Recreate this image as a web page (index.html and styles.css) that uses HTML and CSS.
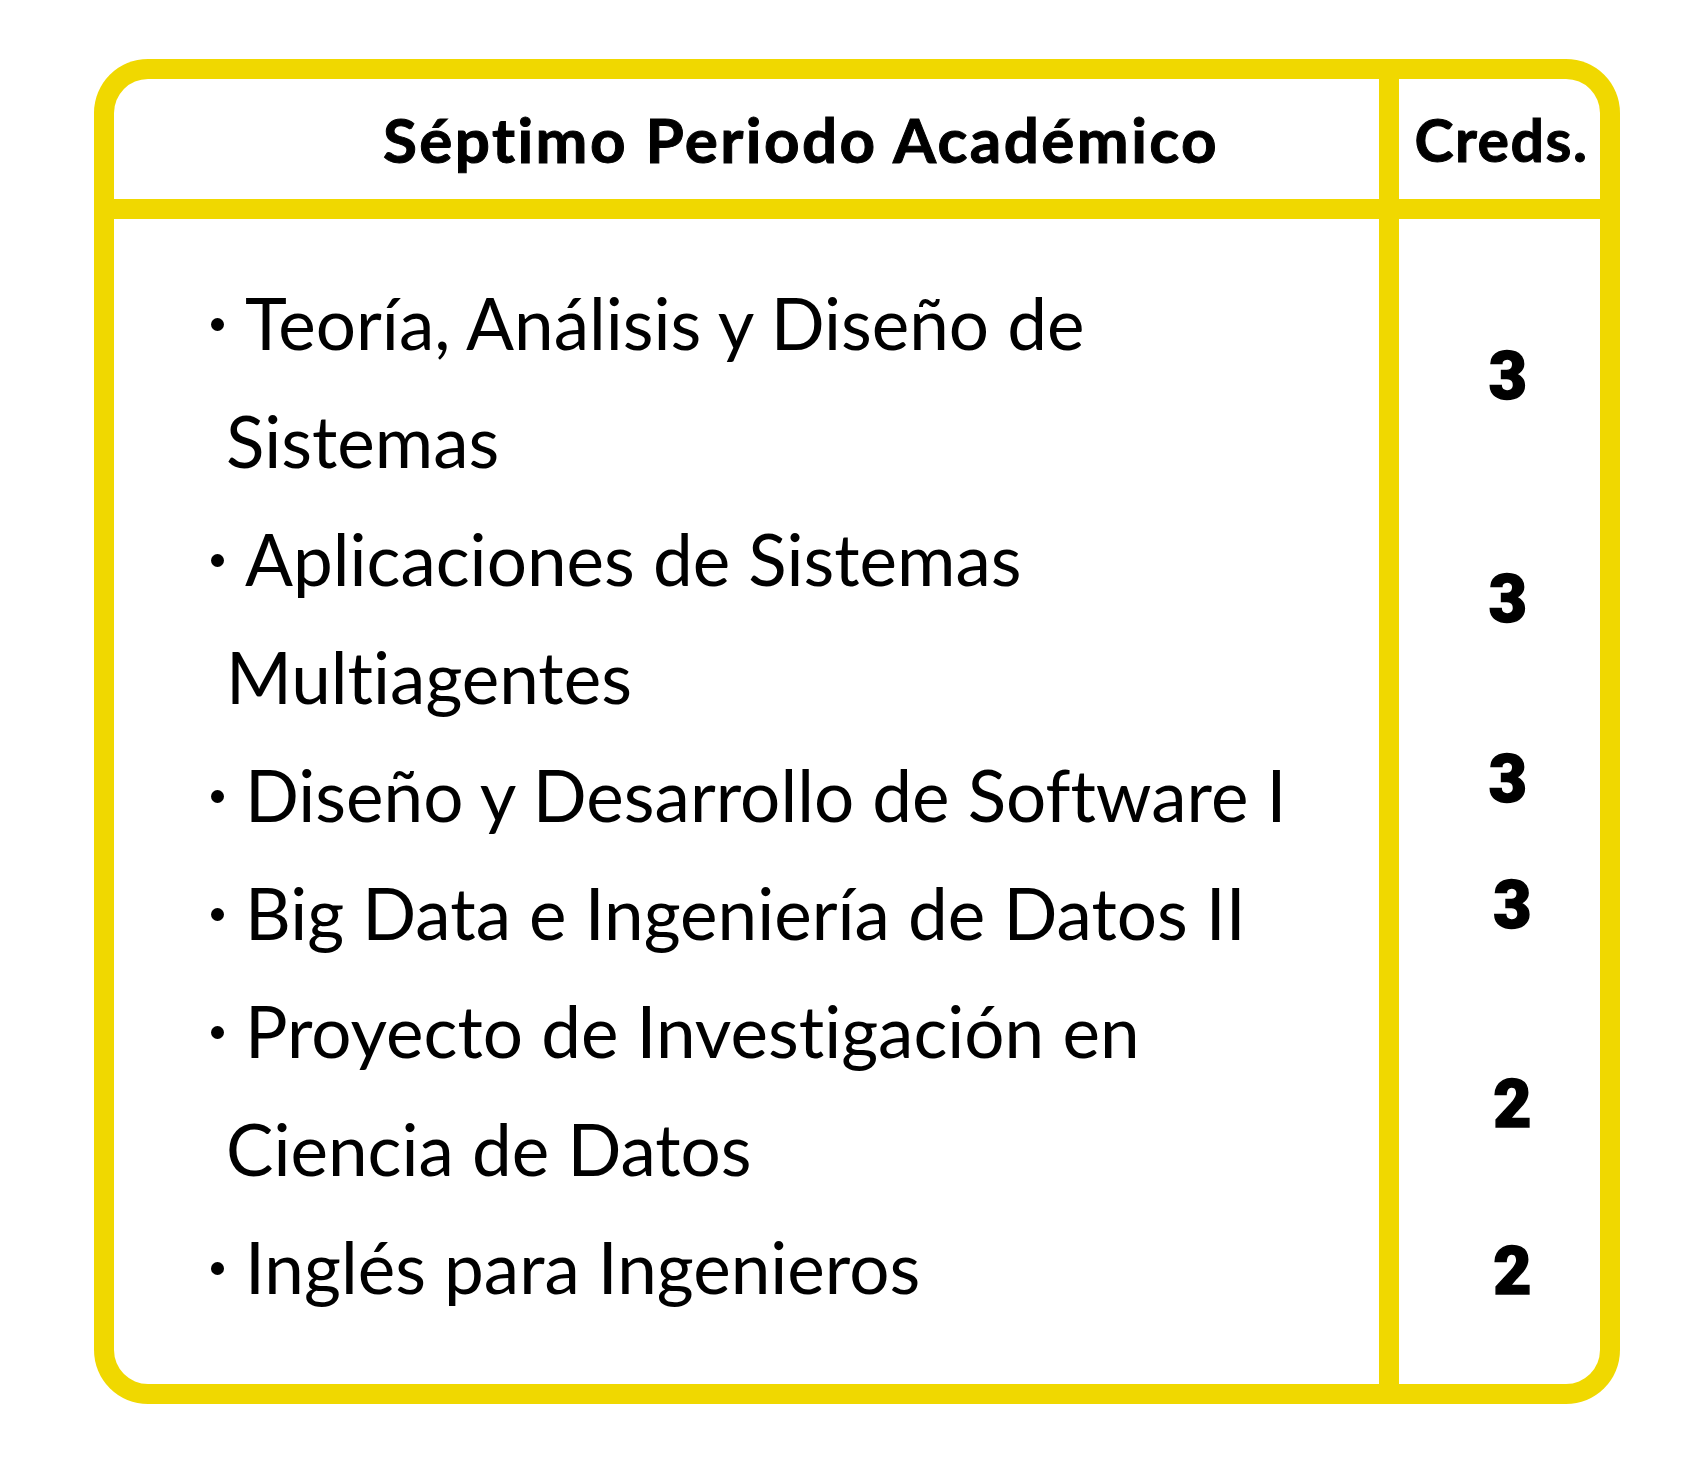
FILE: index.html
```html
<!DOCTYPE html>
<html lang="es">
<head>
<meta charset="utf-8">
<title>Séptimo Periodo Académico</title>
<link rel="stylesheet" href="styles.css">
</head>
<body>
<div class="card">
  <div class="cell head-main"><h1 class="title">Séptimo Periodo Académico</h1></div>
  <div class="cell head-creds"><span class="creds-title">Creds.</span></div>
  <div class="cell body-main">
    <ul class="subjects">
      <li class="subject">Teoría, Análisis y Diseño de Sistemas</li>
      <li class="subject">Aplicaciones de Sistemas Multiagentes</li>
      <li class="subject">Diseño y Desarrollo de Software I</li>
      <li class="subject">Big Data e Ingeniería de Datos II</li>
      <li class="subject">Proyecto de Investigación en Ciencia de Datos</li>
      <li class="subject">Inglés para Ingenieros</li>
    </ul>
  </div>
  <div class="cell body-creds">
    <div class="credit c1">3</div>
    <div class="credit c2">3</div>
    <div class="credit c3">3</div>
    <div class="credit c4 shift">3</div>
    <div class="credit c5 shift">2</div>
    <div class="credit c6 shift">2</div>
  </div>
</div>
</body>
</html>
```

FILE: styles.css
```css
* { box-sizing: border-box; }

html, body {
  margin: 0;
  padding: 0;
  background: #ffffff;
}

body {
  font-family: "Lato", "Liberation Sans", sans-serif;
  font-variant-ligatures: none;
  color: #000000;
}

.card {
  margin: 59px 0 0 94px;
  width: 1526px;
  height: 1345px;
  padding: 20px;
  background: #f0d800;
  border-radius: 54px;
  display: grid;
  grid-template-columns: 1265px 201px;
  grid-template-rows: 120px 1fr;
  gap: 20px;
}

.cell {
  background: #ffffff;
  min-width: 0;
}

.head-main {
  border-top-left-radius: 34px;
  display: flex;
  align-items: center;
  padding-left: 269px;
}

.head-creds {
  border-top-right-radius: 34px;
  display: flex;
  align-items: center;
  justify-content: center;
  padding-left: 4px;
}

.body-main { border-bottom-left-radius: 34px; }
.body-creds { border-bottom-right-radius: 34px; }

.title {
  margin: 0;
  font-size: 62px;
  font-weight: 700;
  letter-spacing: 2.4px;
  line-height: 1;
  white-space: nowrap;
  -webkit-text-stroke: 1px #000000;
}

.creds-title {
  font-size: 59px;
  font-weight: 700;
  letter-spacing: 1.5px;
  line-height: 1;
  -webkit-text-stroke: 1px #000000;
}

.subjects {
  list-style: none;
  margin: 0;
  padding: 45px 60px 0 112px;
}

.subject {
  font-size: 71px;
  font-weight: 400;
  line-height: 118px;
  text-indent: -15px;
}

.subject::before {
  content: "";
  display: inline-block;
  width: 13px;
  height: 13px;
  border-radius: 50%;
  background: #000000;
  margin-right: 21px;
  vertical-align: 19px;
}

.body-creds {
  padding-top: 125px;
  padding-left: 17px;
  display: flex;
  flex-direction: column;
  align-items: center;
}

.credit {
  font-family: "Roboto", "Lato", sans-serif;
  font-size: 66px;
  font-weight: 900;
  line-height: 66px;
  -webkit-text-stroke: 1.5px #000000;
}

.credit.shift { margin-left: 9px; }
.c2 { margin-top: 157px; }
.c3 { margin-top: 114px; }
.c4 { margin-top: 60px; }
.c5 { margin-top: 133px; }
.c6 { margin-top: 101px; }
```
